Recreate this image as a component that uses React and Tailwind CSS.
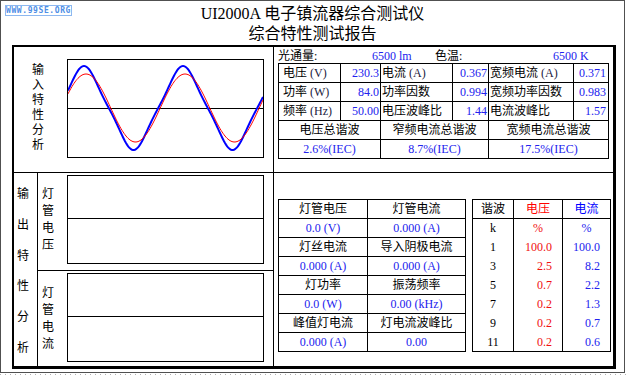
import React from 'react';

// sampled waveform for the input-characteristics scope
const wave = (amp, peak, h3) => {
  const pts = [];
  for (let x = 0; x <= 195; x += 1) {
    const th = (2 * Math.PI * (x - peak)) / 99;
    const v = (Math.cos(th) + h3 * Math.cos(3 * th)) / (1 + h3);
    pts.push(`${x},${(48 - amp * v).toFixed(2)}`);
  }
  return pts.join(' ');
};

const Scope = () => (
  <div className="mt-[12px] ml-[5px] w-[197px] h-[99px] border border-black">
    <svg width="195" height="97" viewBox="0 0 195 97" className="block">
      <line x1="0" y1="48.5" x2="195" y2="48.5" stroke="#000" strokeWidth="1" />
      <polyline points={wave(42, 16, 0.08)} fill="none" stroke="#0000ff" strokeWidth="2" />
      <polyline points={wave(34, 18, 0)} fill="none" stroke="#ff0000" strokeWidth="1" />
    </svg>
  </div>
);

const EmptyScope = () => (
  <div className="mt-[2px] w-[197px] h-[89px] border border-black flex flex-col">
    <div className="h-[43px] border-b border-black" />
  </div>
);

const VText = ({ chars, className = '' }) => (
  <div className={`flex flex-col ${className}`}>
    {chars.split('').map((c, i) => (
      <span key={i}>{c}</span>
    ))}
  </div>
);

const C = ({ className = '', children }) => (
  <div className={`border-r border-b border-black h-[19px] leading-[18px] whitespace-nowrap overflow-hidden ${className}`}>
    {children}
  </div>
);

const Unit = ({ children }) => <span className="text-[#1a1a40]">{children}</span>;

const inputRows = [
  [['电压', '(V)'], '230.3', ['电流', '(A)'], '0.367', ['宽频电流', '(A)'], '0.371'],
  [['功率', '(W)'], '84.0', ['功率因数'], '0.994', ['宽频功率因数'], '0.983'],
  [['频率', '(Hz)'], '50.00', ['电压波峰比'], '1.44', ['电流波峰比'], '1.57'],
];

const outputRows = [
  ['灯管电压', '灯管电流'],
  ['0.0 (V)', '0.000 (A)'],
  ['灯丝电流', '导入阴极电流'],
  ['0.000 (A)', '0.000 (A)'],
  ['灯功率', '振荡频率'],
  ['0.0 (W)', '0.00 (kHz)'],
  ['峰值灯电流', '灯电流波峰比'],
  ['0.000 (A)', '0.00'],
];

const harmonics = [
  ['k', '%', '%'],
  ['1', '100.0', '100.0'],
  ['3', '2.5', '8.2'],
  ['5', '0.7', '2.2'],
  ['7', '0.2', '1.3'],
  ['9', '0.2', '0.7'],
  ['11', '0.2', '0.6'],
];

const Label = ({ parts }) => (
  <>
    {parts[0]}
    {parts[1] && <Unit> {parts[1]}</Unit>}
  </>
);

export default function App() {
  return (
    <div className="w-[627px] h-[376px] bg-white overflow-hidden text-black text-[12px] [font-family:'Liberation_Serif','Noto_Sans_CJK_SC',serif]">
      <div className="relative w-[625px] h-[373px] border border-[#505050]">
        <div className="absolute left-[4px] top-[4px] w-[67px] h-[11px] border border-[#8db8f0] text-[8px] leading-[9px] font-bold text-[#4f8fe6] tracking-[0.6px] text-center [font-family:'DejaVu_Sans_Mono',monospace]">
          WWW.99SE.ORG
        </div>

        <div className="h-[44px] pt-[3px] text-center text-[16px] leading-[20px]">
          <div>UI2000A 电子镇流器综合测试仪</div>
          <div>综合特性测试报告</div>
        </div>

        <div className="ml-[11px] w-[604px] h-[324px] border-t-2 border-l-2 border-r-[3px] border-b-[3px] border-black flex flex-col">
          {/* input characteristics */}
          <div className="h-[126px] flex border-b border-black">
            <div className="w-[260px] border-r border-black flex items-start">
              <VText chars="输入特性分析" className="w-[48px] pt-[16px] items-center leading-[15px]" />
              <Scope />
            </div>
            <div className="flex-1 pl-[4px]">
              <div className="h-[16px] leading-[16px] pt-[1px] flex whitespace-nowrap">
                <span className="w-[94px]">光通量:</span>
                <span className="w-[63px] text-[#2222ee]">6500 lm</span>
                <span className="w-[118px]">色温:</span>
                <span className="text-[#2222ee]">6500 K</span>
              </div>
              <div className="w-[331px] border-l border-t border-black grid grid-cols-[62px_40px_72px_36px_85px_35px]">
                {inputRows.map((r, i) => (
                  <React.Fragment key={i}>
                    <C className="pl-[4px]"><Label parts={r[0]} /></C>
                    <C className="text-right pr-[1px] text-[#2222ee]">{r[1]}</C>
                    <C className="pl-[1px]"><Label parts={r[2]} /></C>
                    <C className="text-right pr-[1px] text-[#2222ee]">{r[3]}</C>
                    <C className="pl-[1px]"><Label parts={r[4]} /></C>
                    <C className="text-right pr-[2px] text-[#2222ee]">{r[5]}</C>
                  </React.Fragment>
                ))}
                <C className="col-span-2 text-center">电压总谐波</C>
                <C className="col-span-2 text-center">窄频电流总谐波</C>
                <C className="col-span-2 text-center">宽频电流总谐波</C>
                <C className="col-span-2 text-center text-[#2222ee]">2.6%(IEC)</C>
                <C className="col-span-2 text-center text-[#2222ee]">8.7%(IEC)</C>
                <C className="col-span-2 text-center text-[#2222ee]">17.5%(IEC)</C>
              </div>
            </div>
          </div>

          {/* output characteristics */}
          <div className="flex-1 flex">
            <div className="w-[260px] border-r border-black flex">
              <div className="w-[24px] border-r border-black pl-[3px] pt-[15px] pb-[12px] flex flex-col justify-between leading-[12px]">
                {'输出特性分析'.split('').map((c) => (
                  <span key={c}>{c}</span>
                ))}
              </div>
              <div className="flex-1 flex flex-col">
                <div className="h-[98px] border-b border-black flex items-start">
                  <VText chars="灯管电压" className="w-[29px] pl-[4px] pt-[13px] leading-[17px]" />
                  <EmptyScope />
                </div>
                <div className="flex-1 flex items-start">
                  <VText chars="灯管电流" className="w-[29px] pl-[4px] pt-[14px] leading-[17px]" />
                  <EmptyScope />
                </div>
              </div>
            </div>

            <div className="flex-1 pl-[4px] pt-[26px] flex items-start">
              <div className="w-[188px] border-l border-t border-black grid grid-cols-[89px_98px]">
                {outputRows.map((r, i) => (
                  <React.Fragment key={i}>
                    {r.map((t, j) => (
                      <C key={j} className={`text-center ${i % 2 ? 'text-[#2222ee]' : ''}`}>{t}</C>
                    ))}
                  </React.Fragment>
                ))}
              </div>

              <div className="ml-[6px] w-[139px] border-l border-t border-b border-black">
                <div className="grid grid-cols-[41px_49px_48px]">
                  <C className="text-center">谐波</C>
                  <C className="text-center text-[#ff0000]">电压</C>
                  <C className="text-center text-[#0000ff]">电流</C>
                </div>
                <div className="grid grid-cols-[41px_49px_48px]">
                  {harmonics.map((r, i) => {
                    const h = i === harmonics.length - 1 ? 'h-[18px]' : 'h-[19px]';
                    const align = i === 0 ? 'text-center' : 'text-right pr-[10px]';
                    return (
                      <React.Fragment key={i}>
                        <div className={`${h} leading-[19px] border-r border-black text-center`}>{r[0]}</div>
                        <div className={`${h} leading-[19px] border-r border-black text-[#f01010] ${align}`}>{r[1]}</div>
                        <div className={`${h} leading-[19px] border-r border-black text-[#2222ee] ${align}`}>{r[2]}</div>
                      </React.Fragment>
                    );
                  })}
                </div>
              </div>
            </div>
          </div>
        </div>
      </div>
      <div className="mt-[1px] h-px w-[627px] bg-[repeating-linear-gradient(90deg,#b0b0b0_0_1px,transparent_1px_5px)]" />
    </div>
  );
}
